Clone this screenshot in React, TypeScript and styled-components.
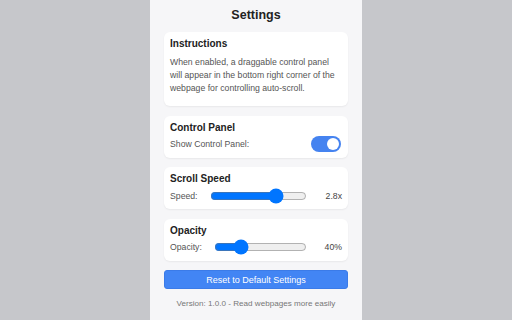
import React, { useState } from 'react';
import styled, { createGlobalStyle } from 'styled-components';

const GlobalStyle = createGlobalStyle`
	html, body {
		margin: 0;
		padding: 0;
		background: #c6c7cb;
		font-family: 'Liberation Sans', Arial, sans-serif;
	}
`;

const Page = styled.div`
	display: flex;
	justify-content: center;
	min-height: 320px;
`;

const Panel = styled.div`
	width: 212px;
	box-sizing: border-box;
	min-height: 320px;
	background: #f6f6f8;
	padding: 9px 14px 0;
	display: flex;
	flex-direction: column;
	gap: 9.5px;
`;

const Title = styled.h1`
	margin: 0 0 0.5px;
	text-align: center;
	font-size: 12.5px;
	line-height: 13px;
	font-weight: bold;
	color: #222;
`;

const Card = styled.section`
	background: #fff;
	border-radius: 6px;
	padding: 5px 6px 5px;
	box-shadow: 0 1px 2px rgba(0, 0, 0, 0.06);
`;

const CardTitle = styled.h2`
	margin: 0;
	font-size: 10px;
	line-height: 13px;
	font-weight: bold;
	color: #222;
`;

const Copy = styled.p`
	margin: 6px 0 6px;
	font-size: 8.7px;
	line-height: 13px;
	color: #555;
`;

const Row = styled.div`
	display: flex;
	align-items: center;
	margin-top: 2px;
	height: 17px;
	font-size: 8.7px;
	color: #555;
`;

const Label = styled.span`
	flex: 1;
`;

const SliderLabel = styled.span`
	margin-right: 12px;
`;

const Slider = styled.input`
	flex: 1;
	margin: 0;
	height: 16px;
	min-width: 0;
`;

const Value = styled.span`
	width: 35px;
	text-align: right;
	color: #444;
`;

const Toggle = styled.button<{ $on: boolean }>`
	position: relative;
	width: 30px;
	height: 16px;
	border: none;
	border-radius: 8px;
	padding: 0;
	margin-right: 1px;
	background: ${(p) => (p.$on ? '#4583f0' : '#ccc')};
	cursor: pointer;

	&::after {
		content: '';
		position: absolute;
		top: 2px;
		left: ${(p) => (p.$on ? '16px' : '2px')};
		width: 12px;
		height: 12px;
		border-radius: 50%;
		background: #fff;
	}
`;

const ResetButton = styled.button`
	height: 19px;
	border: 1px solid #3b7be8;
	border-radius: 3px;
	background: #4285f4;
	color: #fff;
	font-family: inherit;
	font-size: 9px;
	cursor: pointer;
`;

const Version = styled.div`
	text-align: center;
	font-size: 8.1px;
	color: #777;
	margin-top: 0;
`;

export default function App() {
	const [showPanel, setShowPanel] = useState(true);
	const [speed, setSpeed] = useState(2.8);
	const [opacity, setOpacity] = useState(40);

	return (
		<Page>
			<GlobalStyle />
			<Panel>
				<Title>Settings</Title>
				<Card>
					<CardTitle>Instructions</CardTitle>
					<Copy>
						When enabled, a draggable control panel will appear in the bottom right corner of the
						webpage for controlling auto-scroll.
					</Copy>
				</Card>
				<Card>
					<CardTitle>Control Panel</CardTitle>
					<Row>
						<Label>Show Control Panel:</Label>
						<Toggle $on={showPanel} onClick={() => setShowPanel(!showPanel)} />
					</Row>
				</Card>
				<Card>
					<CardTitle>Scroll Speed</CardTitle>
					<Row>
						<SliderLabel>Speed:</SliderLabel>
						<Slider
							type="range"
							min={0.2}
							max={3.8}
							step={0.1}
							value={speed}
							onChange={(e) => setSpeed(Number(e.target.value))}
						/>
						<Value>{speed.toFixed(1)}x</Value>
					</Row>
				</Card>
				<Card>
					<CardTitle>Opacity</CardTitle>
					<Row>
						<SliderLabel>Opacity:</SliderLabel>
						<Slider
							type="range"
							min={20}
							max={100}
							value={opacity}
							onChange={(e) => setOpacity(Number(e.target.value))}
						/>
						<Value>{opacity}%</Value>
					</Row>
				</Card>
				<ResetButton>Reset to Default Settings</ResetButton>
				<Version>Version: 1.0.0 - Read webpages more easily</Version>
			</Panel>
		</Page>
	);
}
